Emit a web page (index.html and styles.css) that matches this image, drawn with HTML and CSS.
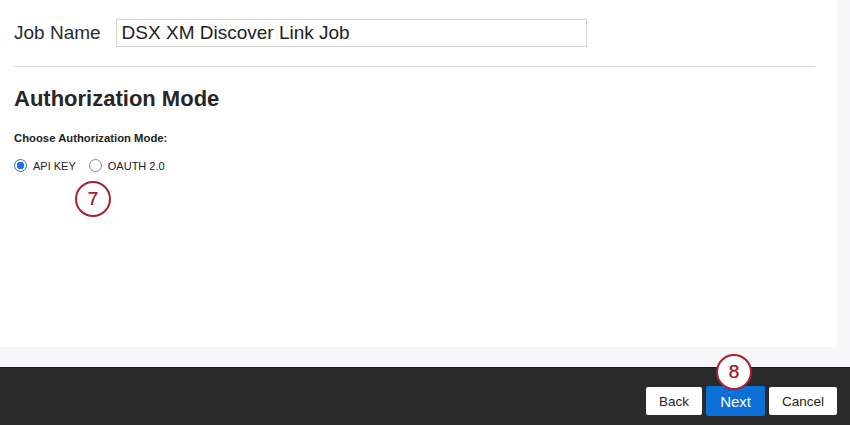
FILE: index.html
```html
<!DOCTYPE html>
<html lang="en">
<head>
    <meta charset="UTF-8">
    <title>Authorization Mode</title>
    <link rel="stylesheet" href="styles.css">
</head>
<body>
<div class="page">
    <div class="panel">
        <div class="job-row">
            <label class="job-label" for="job-name">Job Name</label>
            <input class="job-input" id="job-name" value="DSX XM Discover Link Job">
        </div>
        <div class="divider"></div>
        <h2 class="section-title">Authorization Mode</h2>
        <div class="field-label">Choose Authorization Mode:</div>
        <div class="radio-group">
            <span class="radio checked"></span>
            <span class="radio-text">API KEY</span>
            <span class="radio"></span>
            <span class="radio-text">OAUTH 2.0</span>
        </div>
    </div>
    <div class="footer">
        <button class="btn">Back</button>
        <button class="btn btn-primary">Next</button>
        <button class="btn">Cancel</button>
    </div>
    <div class="callout callout-7">7</div>
    <div class="callout callout-8">8</div>
</div>
</body>
</html>
```

FILE: styles.css
```css
body {
    margin: 0;
    background-color: #f7f7f9;
    font-family: "Liberation Sans", Arial, sans-serif;
    color: #222;
}

.page {
    position: relative;
    width: 850px;
    height: 425px;
    overflow: hidden;
}

.panel {
    width: 837px;
    height: 347px;
    background-color: #fff;
    box-sizing: border-box;
    padding: 19px 22px 0 14px;
}

.job-row {
    display: flex;
    align-items: center;
    gap: 15px;
}

.job-label {
    font-size: 19px;
    color: #2b2b2b;
}

.job-input {
    width: 471px;
    height: 28px;
    box-sizing: border-box;
    border: 1px solid #d4d4d4;
    padding: 0 5px;
    font-family: "Liberation Sans", Arial, sans-serif;
    font-size: 19px;
    color: #222;
    outline: none;
}

.divider {
    margin-top: 19px;
    border-top: 1px solid #ddd;
}

.section-title {
    margin: 19px 0 0;
    font-size: 22px;
    line-height: 26px;
    font-weight: bold;
    color: #262626;
}

.field-label {
    margin-top: 20px;
    font-size: 11.3px;
    font-weight: bold;
    color: #222;
}

.radio-group {
    display: flex;
    align-items: center;
    margin-top: 15px;
    font-size: 11px;
}

.radio {
    width: 13px;
    height: 13px;
    box-sizing: border-box;
    border: 1px solid #8a8a8a;
    border-radius: 50%;
    background-color: #fff;
    margin-right: 6px;
}

.radio.checked {
    border: 1px solid #1a73e8;
    background: radial-gradient(circle, #1a73e8 0 3.5px, #fff 4px);
}

.radio-text {
    margin-right: 13px;
    color: #222;
}

.footer {
    height: 58px;
    margin-top: 20px;
    box-sizing: border-box;
    background-color: #2a2a2a;
    border-top: 1px solid #1c1c1c;
    display: flex;
    justify-content: flex-end;
    align-items: flex-start;
    padding: 19px 13px 0 0;
    gap: 4px;
}

.btn {
    height: 28px;
    padding: 0 13px;
    border: none;
    border-radius: 2px;
    background-color: #fff;
    font-family: "Liberation Sans", Arial, sans-serif;
    font-size: 13.5px;
    color: #222;
}

.btn-primary {
    height: 30px;
    margin-top: -1px;
    padding: 0 14px;
    background-color: #0b6fd6;
    color: #fff;
    font-size: 15px;
}

.callout {
    position: absolute;
    width: 36px;
    height: 36px;
    box-sizing: border-box;
    border: 2.5px solid #a8222e;
    border-radius: 50%;
    background-color: #fff;
    color: #a8222e;
    font-size: 19px;
    line-height: 31px;
    text-align: center;
    text-shadow: 0 0 0.4px #a8222e;
}

.callout-7 {
    left: 75px;
    top: 181px;
}

.callout-8 {
    left: 716px;
    top: 354px;
}
```
